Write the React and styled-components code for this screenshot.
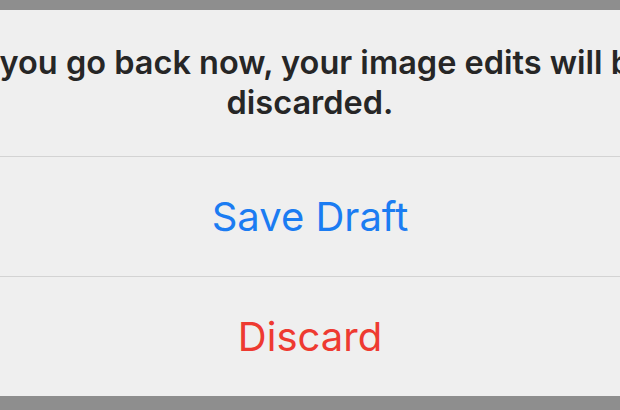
import React from "react";
import styled, { createGlobalStyle } from "styled-components";

const GlobalStyle = createGlobalStyle`
  html, body {
    margin: 0;
    padding: 0;
    background: #8e8e8e;
    overflow: hidden;
  }
  body {
    font-family: Inter, "Noto Sans", "Liberation Sans", sans-serif;
  }
`;

const Page = styled.div`
  width: 620px;
  height: 410px;
  padding-top: 10px;
  box-sizing: border-box;
  overflow: hidden;
  background: #8e8e8e;
`;

const Alert = styled.div`
  width: 620px;
  height: 386px;
  background: #efefef;
  display: flex;
  flex-direction: column;
  overflow: hidden;
`;

const Message = styled.div`
  height: 147px;
  box-sizing: border-box;
  padding-top: 33px;
  display: flex;
  flex-direction: column;
  align-items: center;
  font-size: 32.5px;
  line-height: 40px;
  font-weight: 600;
  color: #262626;
  border-bottom: 1px solid #d3d3d3;
`;

const Line = styled.div`
  white-space: nowrap;
`;

const Action = styled.div`
  flex: ${(p) => (p.last ? "0 0 118px" : "0 0 119px")};
  display: flex;
  align-items: center;
  justify-content: center;
  font-size: 40px;
  font-weight: 400;
  color: ${(p) => p.color};
  border-bottom: ${(p) => (p.last ? "none" : "1px solid #d3d3d3")};
`;

export default function App() {
  return (
    <>
      <GlobalStyle />
      <Page>
        <Alert>
          <Message>
            <Line>If you go back now, your image edits will be</Line>
            <Line>discarded.</Line>
          </Message>
          <Action color="#1b7cf2">Save Draft</Action>
          <Action color="#ee3a31" last>
            Discard
          </Action>
        </Alert>
      </Page>
    </>
  );
}
